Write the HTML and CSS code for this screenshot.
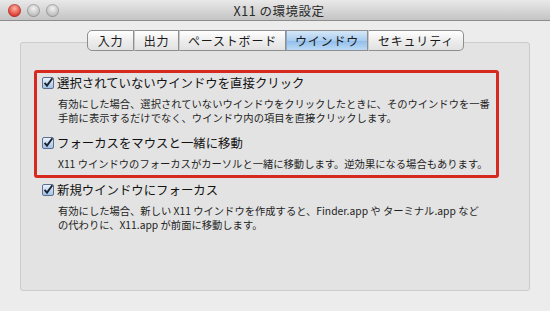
FILE: index.html
```html
<!DOCTYPE html>
<html lang="ja">
<head>
  <meta charset="UTF-8" />
  <title>X11 の環境設定</title>
  <link rel="stylesheet" href="styles.css">
</head>
<body>
  <div class="window">
    <div class="titlebar">
      <div class="lights">
        <span class="light close"></span>
        <span class="light"></span>
        <span class="light"></span>
      </div>
      <div class="title">X11 の環境設定</div>
    </div>

    <div class="content">
      <div class="tabs">
        <div class="tab t1">入力</div>
        <div class="tab t2">出力</div>
        <div class="tab t3">ペーストボード</div>
        <div class="tab t4 active">ウインドウ</div>
        <div class="tab t5">セキュリティ</div>
      </div>

      <div class="panel">
        <div class="highlight">
          <div class="option">
            <div class="label">
              <svg class="check" width="12" height="12" viewBox="0 0 12 12"><defs><linearGradient id="cb" x1="0" y1="0" x2="0" y2="1"><stop offset="0" stop-color="#eef4fc"/><stop offset="1" stop-color="#9fc0e6"/></linearGradient></defs><rect x="0.5" y="0.5" width="11" height="11" rx="1.5" fill="url(#cb)" stroke="#5d6f8e"/><path d="M2.6 5.8 L5 8.6 L10.4 1.2" fill="none" stroke="#1b2433" stroke-width="1.9"/></svg>
              選択されていないウインドウを直接クリック
            </div>
            <p class="desc">有効にした場合、選択されていないウインドウをクリックしたときに、そのウインドウを一番<br>手前に表示するだけでなく、ウインドウ内の項目を直接クリックします。</p>
          </div>
          <div class="option">
            <div class="label">
              <svg class="check" width="12" height="12" viewBox="0 0 12 12"><rect x="0.5" y="0.5" width="11" height="11" rx="1.5" fill="url(#cb)" stroke="#5d6f8e"/><path d="M2.6 5.8 L5 8.6 L10.4 1.2" fill="none" stroke="#1b2433" stroke-width="1.9"/></svg>
              フォーカスをマウスと一緒に移動
            </div>
            <p class="desc">X11 ウインドウのフォーカスがカーソルと一緒に移動します。逆効果になる場合もあります。</p>
          </div>
        </div>

        <div class="option plain">
          <div class="label">
            <svg class="check" width="12" height="12" viewBox="0 0 12 12"><rect x="0.5" y="0.5" width="11" height="11" rx="1.5" fill="url(#cb)" stroke="#5d6f8e"/><path d="M2.6 5.8 L5 8.6 L10.4 1.2" fill="none" stroke="#1b2433" stroke-width="1.9"/></svg>
            新規ウインドウにフォーカス
          </div>
          <p class="desc">有効にした場合、新しい X11 ウインドウを作成すると、Finder.app や ターミナル.app など<br>の代わりに、X11.app が前面に移動します。</p>
        </div>
      </div>
    </div>
  </div>
</body>
</html>
```

FILE: styles.css
```css
body {
  margin: 0;
  font-family: "Noto Sans CJK JP", "Noto Sans", sans-serif;
  background: #ececec;
  color: #1c1c1c;
}

.window {
  width: 550px;
  height: 311px;
  background: #ececec;
  overflow: hidden;
}

.titlebar {
  height: 21px;
  display: flex;
  align-items: center;
  background: linear-gradient(#e9e9e9, #c4c4c4);
  border-bottom: 1px solid #8c8c8c;
  box-sizing: border-box;
}

.lights {
  display: flex;
  gap: 6px;
  padding-left: 8px;
  width: 120px;
}

.light {
  width: 13px;
  height: 13px;
  border-radius: 50%;
  background: radial-gradient(circle at 50% 35%, #f2f2f2, #b9b9b9 70%, #a3a3a3);
  box-shadow: inset 0 0 0 1px rgba(0,0,0,0.18);
}

.light.close {
  background: radial-gradient(circle at 50% 35%, #ffb3a8, #e0463a 60%, #b8221b);
}

.title {
  flex: 1;
  text-align: center;
  margin-right: 120px;
  font-size: 12.5px;
  color: #2a2a2a;
  letter-spacing: 0.5px;
}

.content {
  padding: 0 20px;
}

.tabs {
  display: flex;
  justify-content: center;
  margin-top: 9px;
  margin-left: 1px;
  position: relative;
  z-index: 1;
}

.tab {
  height: 21px;
  box-sizing: border-box;
  display: flex;
  align-items: center;
  justify-content: center;
  font-size: 12px;
  color: #1a1a1a;
  background: linear-gradient(#ffffff, #ececec 55%, #e2e2e2);
  border: 1px solid #8e8e8e;
  border-left: 1px solid #c9c9c9;
  letter-spacing: 0.8px;
}

.t1 { width: 47px; border-left: 1px solid #8e8e8e; border-radius: 5px 0 0 5px; }
.t2 { width: 45px; }
.t3 { width: 107px; }
.t4 { width: 82px; }
.t5 { width: 96px; border-radius: 0 5px 5px 0; }

.tab.active {
  background: linear-gradient(#d7e8f8, #a9cdf0 50%, #93bfea 55%, #bcdaf6);
  border-left-color: #8ea7c2;
}

.panel {
  margin-top: -9px;
  height: 249px;
  box-sizing: border-box;
  background: #e3e3e3;
  border: 1px solid #cbcbcb;
  border-radius: 3px;
  padding: 27px 30px 0 13px;
}

.highlight {
  border: 3px solid #d6291f;
  border-radius: 3px;
  padding: 1px 0 4px 5px;
}

.option.plain {
  margin-top: 3px;
  padding-left: 8px;
}

.option + .option {
  margin-top: 9px;
}

.label {
  display: flex;
  align-items: center;
  gap: 3px;
  height: 18px;
  font-size: 12.4px;
  color: #111;
}

.check {
  flex: none;
}

.desc {
  margin: 5px 0 0 16px;
  font-size: 10.3px;
  line-height: 14px;
  color: #1e1e1e;
  white-space: nowrap;
}
```
